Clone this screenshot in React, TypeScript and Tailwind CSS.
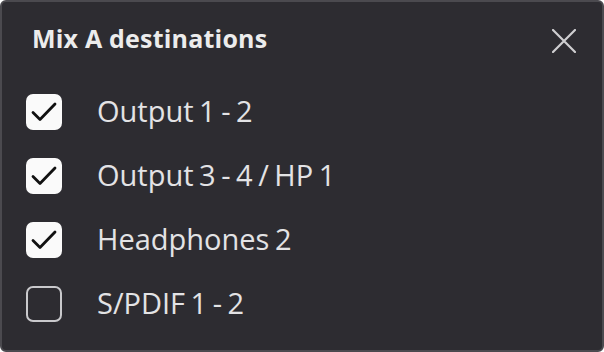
const items = [
  { label: "Output 1 - 2", checked: true },
  { label: "Output 3 - 4 / HP 1", checked: true },
  { label: "Headphones 2", checked: true },
  { label: "S/PDIF 1 - 2", checked: false },
];

const Check = ({ checked }: { checked: boolean }) =>
  checked ? (
    <div className="w-9 h-9 shrink-0 rounded-[7px] bg-[#fafafa]">
      <svg width="36" height="36" viewBox="0 0 36 36" fill="none">
        <path d="M7 18.5 L14 25.5 L29 10" stroke="#111" strokeWidth="2.8" strokeLinecap="round" strokeLinejoin="round" />
      </svg>
    </div>
  ) : (
    <div className="w-9 h-9 shrink-0 rounded-[7px] border-2 border-[#c9c9cc]" />
  );

export default function App() {
  return (
    <div className="w-[604px] h-[352px] bg-white">
      <div
        className="w-full h-full rounded-[6px] border-2 border-[#4b4a4f] bg-[#2d2c31] flex flex-col"
        style={{ fontFamily: "'Open Sans', 'Noto Sans', sans-serif" }}
      >
        <div className="h-[78px] flex items-center justify-between pl-[30px] pr-[26px]">
          <h2 className="text-[25px] leading-none font-bold text-[#ececec] mb-[6px] tracking-[0.2px]">Mix A destinations</h2>
          <svg width="24" height="24" viewBox="0 0 24 24" fill="none">
            <path d="M1 1 L23 23 M23 1 L1 23" stroke="#cfcfd1" strokeWidth="2.2" strokeLinecap="round" />
          </svg>
        </div>
        <ul className="flex flex-col">
          {items.map((it) => (
            <li key={it.label} className="h-16 flex items-center pl-[24px] gap-[35px]">
              <Check checked={it.checked} />
              <span className="text-[29px] leading-none pb-1 text-[#e3e3e5] [word-spacing:-2px]">{it.label}</span>
            </li>
          ))}
        </ul>
      </div>
    </div>
  );
}
